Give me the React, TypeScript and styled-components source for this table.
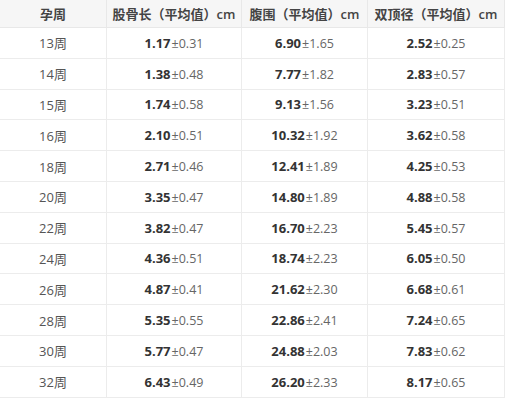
import React from 'react'
import styled, { createGlobalStyle } from 'styled-components'

const GlobalStyle = createGlobalStyle`
  body {
    margin: 0;
    background: #fff;
    font-family: 'Open Sans', 'Noto Sans CJK SC', sans-serif;
  }
`

const Table = styled.table`
  width: 501px;
  border-collapse: collapse;
  table-layout: fixed;
  color: #444;
  font-size: 13px;
`

const HeadCell = styled.th<{ w: number }>`
  width: ${({ w }) => w}px;
  height: 27px;
  padding: 0;
  background: #f6f6f6;
  border-right: 1px solid #e8e8e8;
  border-bottom: 1px solid #e8e8e8;
  font-weight: 600;
  color: #444;
  text-align: center;
  white-space: nowrap;
`

const Row = styled.tr`
  height: 30.8px;
`

const Cell = styled.td`
  padding: 0;
  border-right: 1px solid #ececec;
  border-bottom: 1px solid #ececec;
  text-align: center;
  white-space: nowrap;
  color: #555;
`

const Mean = styled.b`
  font-weight: 700;
  color: #333;
  margin-right: 1px;
`

const Dev = styled.span`
  color: #666;
  font-size: 12.5px;
`

const columns = [
  { title: '孕周', w: 106 },
  { title: '股骨长（平均值）cm', w: 134 },
  { title: '腹围（平均值）cm', w: 125 },
  { title: '双顶径（平均值）cm', w: 136 },
]

type Value = [string, string]

const rows: { week: string; values: Value[] }[] = [
  { week: '13周', values: [['1.17', '0.31'], ['6.90', '1.65'], ['2.52', '0.25']] },
  { week: '14周', values: [['1.38', '0.48'], ['7.77', '1.82'], ['2.83', '0.57']] },
  { week: '15周', values: [['1.74', '0.58'], ['9.13', '1.56'], ['3.23', '0.51']] },
  { week: '16周', values: [['2.10', '0.51'], ['10.32', '1.92'], ['3.62', '0.58']] },
  { week: '18周', values: [['2.71', '0.46'], ['12.41', '1.89'], ['4.25', '0.53']] },
  { week: '20周', values: [['3.35', '0.47'], ['14.80', '1.89'], ['4.88', '0.58']] },
  { week: '22周', values: [['3.82', '0.47'], ['16.70', '2.23'], ['5.45', '0.57']] },
  { week: '24周', values: [['4.36', '0.51'], ['18.74', '2.23'], ['6.05', '0.50']] },
  { week: '26周', values: [['4.87', '0.41'], ['21.62', '2.30'], ['6.68', '0.61']] },
  { week: '28周', values: [['5.35', '0.55'], ['22.86', '2.41'], ['7.24', '0.65']] },
  { week: '30周', values: [['5.77', '0.47'], ['24.88', '2.03'], ['7.83', '0.62']] },
  { week: '32周', values: [['6.43', '0.49'], ['26.20', '2.33'], ['8.17', '0.65']] },
]

const App: React.FC = () => {
  return (
    <>
      <GlobalStyle />
      <Table>
        <thead>
          <tr>
            {columns.map((c) => (
              <HeadCell key={c.title} w={c.w}>
                {c.title}
              </HeadCell>
            ))}
          </tr>
        </thead>
        <tbody>
          {rows.map((r) => (
            <Row key={r.week}>
              <Cell>{r.week}</Cell>
              {r.values.map(([mean, dev], i) => (
                <Cell key={i}>
                  <Mean>{mean}</Mean>
                  <Dev>±{dev}</Dev>
                </Cell>
              ))}
            </Row>
          ))}
        </tbody>
      </Table>
    </>
  )
}

export default App
